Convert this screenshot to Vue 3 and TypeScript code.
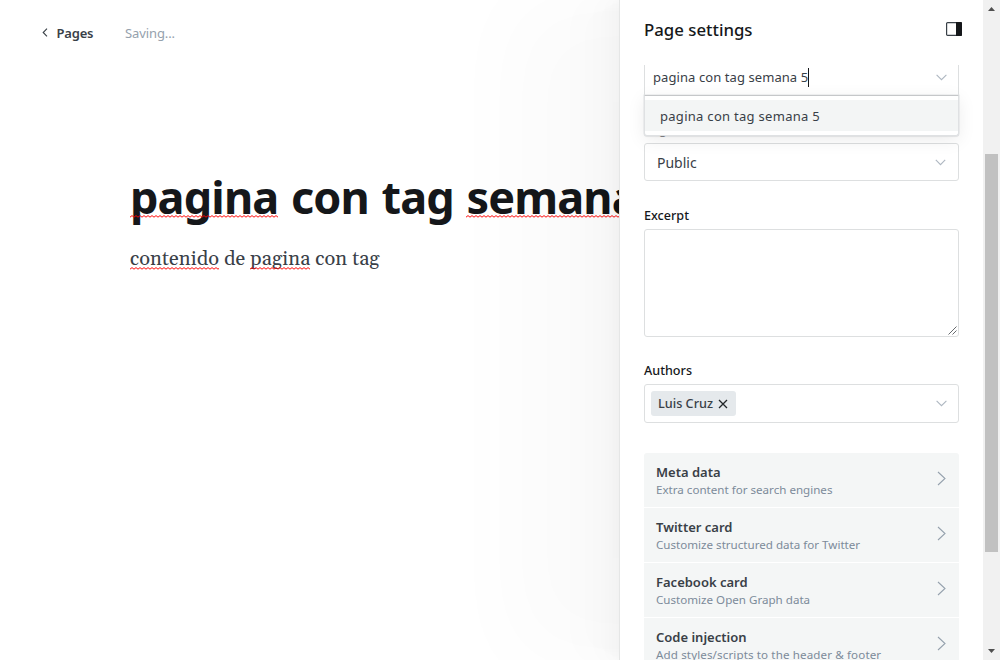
<script setup lang="ts">
interface SettingLink {
  title: string
  description: string
}

const links: SettingLink[] = [
  { title: 'Meta data', description: 'Extra content for search engines' },
  { title: 'Twitter card', description: 'Customize structured data for Twitter' },
  { title: 'Facebook card', description: 'Customize Open Graph data' },
  { title: 'Code injection', description: 'Add styles/scripts to the header & footer' },
]
const tag = 'pagina con tag semana 5'
</script>

<template>
  <div class="app">
    <main class="editor">
      <header class="topbar">
        <a class="back">
          <svg width="6" height="9" viewBox="0 0 6 9"><path d="M5 0.7 1.2 4.5 5 8.3" /></svg>
          <span>Pages</span>
        </a>
        <span class="status">Saving...</span>
      </header>
      <h1 class="title"><span class="misspelt">pagina</span> con tag <span class="misspelt">semana</span> 5</h1>
      <p class="content"><span class="misspelt">contenido</span> de <span class="misspelt">pagina</span> con tag</p>
    </main>

    <aside class="panel">
      <header class="panel-head">
        <h2>Page settings</h2>
        <svg class="toggle" width="16" height="14" viewBox="0 0 16 14">
          <rect x="0.6" y="0.6" width="14.8" height="12.8" rx="1" fill="none" stroke="#394047" stroke-width="1.2" />
          <path d="M10 0h5a1 1 0 0 1 1 1v12a1 1 0 0 1-1 1h-5z" fill="#15171a" />
        </svg>
      </header>

      <div class="panel-body">
        <div class="tag-input">
          <span class="typed">{{ tag }}</span><i class="caret"></i>
          <svg class="down" width="11" height="7" viewBox="0 0 11 7"><path d="M0.6 0.8 5.5 5.7 10.4 0.8" /></svg>
          <div class="dropdown"><div class="option">{{ tag }}</div></div>
        </div>

        <label class="label">Page access</label>
        <div class="field select">
          <span>Public</span>
          <svg class="down" width="11" height="7" viewBox="0 0 11 7"><path d="M0.8 0.8 5.5 5.7 10.2 0.8" /></svg>
        </div>

        <label class="label excerpt">Excerpt</label>
        <div class="field area">
          <svg width="9" height="9" viewBox="0 0 9 9"><path d="M0.5 8.5 8.5 0.5M4.5 8.5 8.5 4.5" /></svg>
        </div>

        <label class="label">Authors</label>
        <div class="field authors">
          <span class="token">Luis Cruz
            <svg width="10" height="10" viewBox="0 0 10 10"><path d="M1 1 9 9M9 1 1 9" /></svg>
          </span>
          <svg class="down" width="11" height="7" viewBox="0 0 11 7"><path d="M0.6 0.8 5.5 5.7 10.4 0.8" /></svg>
        </div>

        <ul class="links">
          <li v-for="link in links" :key="link.title">
            <div>
              <strong>{{ link.title }}</strong>
              <small>{{ link.description }}</small>
            </div>
            <svg width="9" height="15" viewBox="0 0 9 15"><path d="M1 1 8 7.5 1 14" /></svg>
          </li>
        </ul>
      </div>
    </aside>

    <div class="scrollbar">
      <svg width="7" height="4" viewBox="0 0 7 4"><path d="M0 4 3.5 0 7 4z" /></svg>
      <div class="thumb"></div>
      <svg width="7" height="4" viewBox="0 0 7 4"><path d="M0 0 3.5 4 7 0z" /></svg>
    </div>
  </div>
</template>

<style>
body {
  background: #fff;
}
</style>

<style scoped>
* {
  box-sizing: border-box;
}

.app {
  display: grid;
  grid-template-columns: 619px 364px 17px;
  height: 660px;
  overflow: hidden;
  font-family: "Noto Sans", "Open Sans", sans-serif;
  color: #394047;
}

svg {
  display: block;
  flex: none;
  fill: none;
}

.editor {
  min-width: 0;
}

.topbar {
  display: flex;
  align-items: center;
  gap: 31px;
  height: 66px;
  padding-left: 42px;
}

.back {
  display: flex;
  align-items: center;
  gap: 8.5px;
  width: 52px;
  font-size: 13px;
  font-weight: 600;
  letter-spacing: -0.2px;
}

.back svg {
  margin-top: -1px;
  stroke: #394047;
  stroke-width: 1.1;
}

.status {
  font-size: 13px;
  letter-spacing: -0.1px;
  color: #95a1ad;
}

.title {
  margin: 103px 0 0 130px;
  white-space: nowrap;
  font-size: 45px;
  line-height: 56px;
  font-weight: 700;
  letter-spacing: -0.85px;
  word-spacing: 1.7px;
  color: #15171a;
}

.content {
  margin: 19px 0 0 130px;
  font-family: Gelasio, Georgia, "Liberation Serif", serif;
  font-size: 20px;
  line-height: 30px;
  letter-spacing: 0.1px;
  white-space: nowrap;
}

.misspelt {
  position: relative;
}

/* spell-checker squiggle */
.misspelt::after {
  content: "";
  position: absolute;
  left: 0;
  right: 0;
  bottom: 2px;
  height: 3px;
  background: url("data:image/svg+xml,%3Csvg xmlns='http://www.w3.org/2000/svg' width='4' height='3'%3E%3Cpath d='M-2 .6 0 2.2 2 .6 4 2.2 6 .6' fill='none' stroke='red' stroke-width='.95'/%3E%3C/svg%3E") repeat-x;
}

.title .misspelt::after {
  bottom: 9px;
}

.panel {
  position: relative;
  display: flex;
  flex-direction: column;
  height: 660px;
  background: #fff;
  border-left: 1px solid #e5e6e6;
  box-shadow:
    -2.8px 0 2.2px rgba(0, 0, 0, 0.006),
    -6.7px 0 5.3px rgba(0, 0, 0, 0.008),
    -12.5px 0 10px rgba(0, 0, 0, 0.01),
    -22.3px 0 17.9px rgba(0, 0, 0, 0.01),
    -41.8px 0 33.4px rgba(0, 0, 0, 0.012),
    -108px 0 84px rgba(0, 0, 0, 0.02);
}

.panel-head {
  display: flex;
  flex: none;
  align-items: flex-start;
  justify-content: space-between;
  height: 65px;
  padding: 17px 21px 0 24px;
}

h2 {
  margin: 0;
  font-size: 16.8px;
  line-height: 25px;
  font-weight: 500;
  color: #15171a;
}

.toggle {
  margin-top: 5px;
}

.panel-body {
  flex: 1;
  min-height: 0;
  overflow: hidden;
  padding: 0 24px;
}

.tag-input {
  position: relative;
  display: flex;
  align-items: center;
  height: 31px;
  padding: 0 11px 7px 8px;
  border: 1px solid #dddfe0;
  border-width: 0 1px;
  font-size: 13px;
}

.typed {
  letter-spacing: 0.08px;
}

.caret {
  width: 1px;
  height: 19px;
  background: #15171a;
}

.down {
  margin-left: auto;
  stroke: #aeb7c1;
  stroke-width: 1.1;
}

.dropdown {
  position: absolute;
  top: 30px;
  left: -1px;
  right: -1px;
  z-index: 2;
  height: 41px;
  padding-top: 4px;
  background: #fff;
  border: 1px solid #dfe1e3;
  border-top-color: #c5c7c9;
  border-radius: 0 0 3px 3px;
  box-shadow:
    0 0 0 0.5px #dfe1e3,
    0 1px 1px rgba(0, 0, 0, 0.08),
    0 4px 18px rgba(0, 0, 0, 0.08);
}

.option {
  height: 31px;
  padding: 1px 0 0 15px;
  background: #f3f5f5;
  line-height: 31px;
  letter-spacing: 0.29px;
}

.label {
  display: block;
  height: 47px;
  padding-top: 24px;
  font-size: 12.6px;
  line-height: 20px;
  font-weight: 500;
  color: #15171a;
}

.excerpt {
  height: 48px;
  padding-top: 25px;
}

.field {
  display: flex;
  align-items: center;
  border: 1px solid #dddfe0;
  border-radius: 3px;
  background: #fff;
}

.select {
  height: 38px;
  padding: 0 12px;
  font-size: 14px;
}

.area {
  align-items: flex-end;
  justify-content: flex-end;
  height: 108px;
  padding: 1px;
}

.area svg {
  stroke: #55595d;
  stroke-width: 0.9;
}

.authors {
  height: 39px;
  padding: 0 11px 0 6px;
}

.token {
  display: flex;
  align-items: center;
  justify-content: space-between;
  width: 85px;
  height: 25px;
  padding: 0 8px 1px 7px;
  border-radius: 3px;
  background: #e5e9ec;
  font-size: 12.7px;
  font-weight: 500;
}

.token svg {
  margin-top: 2px;
  stroke: #222629;
  stroke-width: 1.3;
}

.links {
  margin: 30px 0 0;
  padding: 0;
  list-style: none;
  border-radius: 3px;
  overflow: hidden;
}

.links li {
  display: flex;
  align-items: flex-start;
  justify-content: space-between;
  height: 55px;
  padding: 10px 13px 0 12px;
  border-bottom: 1px solid #fff;
  background: #f4f6f6;
  background-clip: padding-box;
}

.links strong,
.links small {
  display: block;
  white-space: nowrap;
}

.links strong {
  font-size: 13px;
  line-height: 18px;
  font-weight: 600;
}

.links small {
  font-size: 11.6px;
  line-height: 18px;
  color: #7c8b9a;
}

.links li:last-child small {
  letter-spacing: 0.12px;
}

.links svg {
  margin-top: 8px;
  stroke: #95a1ad;
  stroke-width: 1.1;
}

.scrollbar {
  position: relative;
  display: flex;
  flex-direction: column;
  align-items: center;
  justify-content: space-between;
  padding: 7px 0;
  background: #f1f1f1;
}

.scrollbar svg {
  fill: #505050;
}

.thumb {
  position: absolute;
  top: 154px;
  left: 2px;
  width: 13px;
  height: 398px;
  background: #c1c1c1;
}
</style>
